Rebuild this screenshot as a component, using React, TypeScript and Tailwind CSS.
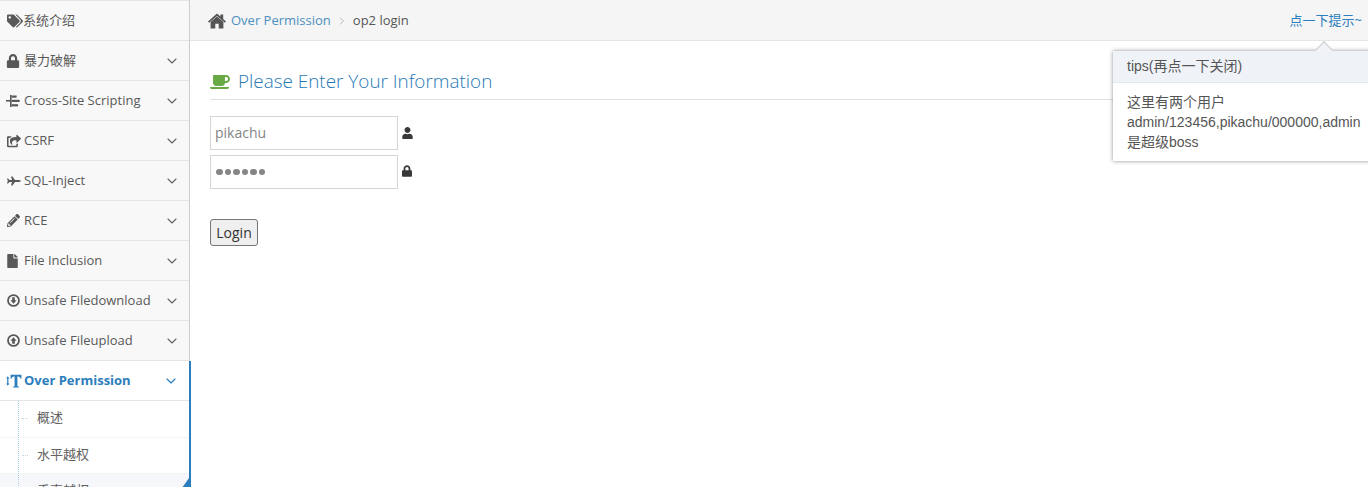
import { ChevronDown, ChevronRight } from "lucide-react";
import {
	FaCoffee,
	FaFile,
	FaLock,
	FaPencilAlt,
	FaShareSquare,
	FaTags,
	FaUser
} from "react-icons/fa";

const cjk = "font-['Open_Sans','Noto_Sans_CJK_SC',sans-serif]";

function TreeIcon() {
	return (
		<svg viewBox="0 0 14 14" className="w-[14px] h-[14px] ml-[-1px]" fill="currentColor">
			<rect x="0" y="6" width="4" height="1.6" />
			<rect x="4" y="1" width="1.6" height="12" />
			<rect x="5.6" y="1.5" width="5" height="2.2" />
			<rect x="5.6" y="5.8" width="8" height="2.2" />
			<rect x="5.6" y="10.2" width="6.5" height="2.2" />
		</svg>
	);
}

function CircleArrow({ up }: { up?: boolean }) {
	return (
		<svg viewBox="0 0 14 14" className={`w-[13px] h-[13px] ${up ? "rotate-180" : ""}`}>
			<circle cx="7" cy="7" r="5.9" fill="none" stroke="currentColor" strokeWidth="1.9" />
			<path d="M5.6 3.4h2.8v3.4h1.9L7 10.6 3.7 6.8h1.9z" fill="currentColor" />
		</svg>
	);
}

function PlaneIcon() {
	return (
		<svg viewBox="0 0 14 12" className="w-[14px] h-[12px]" fill="currentColor">
			<path d="M0 3.5h1L2.5 5H5L4 1.5h1.5L8 5h4Q14 5.6 14 6T12 7H8L5.5 10.5H4L5 7H2.5L1 8.5H0L.8 6z" />
		</svg>
	);
}

function TextHeightIcon() {
	return (
		<svg viewBox="0 0 16 14" className="w-[16px] h-[14px] mr-[2px]" fill="currentColor">
			<path d="M4.6.8H15.4V4.8H14.6Q14.2 2.4 12 2.4H11.4V11.8Q11.4 12.6 13 12.8V13.6H7V12.8Q8.6 12.6 8.6 11.8V2.4H8Q5.8 2.4 5.4 4.8H4.6z" />
			<path d="M1.8 2.2 3.4 4.6H2.4V9.4H3.4L1.8 11.8.2 9.4H1.2V4.6H.2z" />
		</svg>
	);
}

function HomeIcon() {
	return (
		<svg viewBox="0 0 18 16" className="w-[18px] h-[16px] text-[#555] mr-[5px]" fill="currentColor">
			<path d="M2.6 9 9 3.6 15.4 9v6.4h-4.7v-4.6H7.3v4.6H2.6z" />
			<path d="M0 8.4 9 .6l3.4 2.9V1.6h2.8v4.3L18 8.4l-1.1 1.3L9 3 1.1 9.7z" />
		</svg>
	);
}

const menu = [
	{ label: "暴力破解", icon: <FaLock className="w-[14px] h-[14px] ml-[-1px]" /> },
	{ label: "Cross-Site Scripting", icon: <TreeIcon /> },
	{ label: "CSRF", icon: <FaShareSquare className="w-[14px] h-[14px]" /> },
	{ label: "SQL-Inject", icon: <PlaneIcon /> },
	{ label: "RCE", icon: <FaPencilAlt className="w-[13px] h-[13px]" /> },
	{ label: "File Inclusion", icon: <FaFile className="w-[11px] h-[14px]" /> },
	{ label: "Unsafe Filedownload", icon: <CircleArrow /> },
	{ label: "Unsafe Fileupload", icon: <CircleArrow up /> }
];

function MenuRow({ label, icon }: { label: string; icon: React.ReactNode }) {
	return (
		<div className="h-10 flex items-center pl-[7px] pr-[9px] bg-[#f8f8f8] border-b border-[#e5e5e5] text-[#585858]">
			<span className="w-[17px] flex justify-start text-[#585858]">{icon}</span>
			<span className="flex-1 text-[13px]">{label}</span>
			<ChevronDown className="w-[16px] h-[16px] text-[#666]" strokeWidth={1.75} />
		</div>
	);
}

function SubRow({ label, active, tall }: { label: string; active?: boolean; tall?: boolean }) {
	return (
		<div
			className={`relative flex items-center pl-[37px] text-[13px] text-[#616161] border-b border-dotted border-[#ececec] ${
				tall ? "h-[37px]" : "h-9"
			} ${active ? "bg-[#f5f7fa]" : "bg-white"}`}
		>
			<span className="absolute left-[22px] top-[17px] w-[6px] border-t border-dotted border-[#c5d6e4]" />
			<span className={tall ? "mt-[-3px]" : "mt-[-1px]"}>{label}</span>
		</div>
	);
}

export default function App() {
	return (
		<div className={`h-[487px] w-[1368px] overflow-hidden flex bg-white relative ${cjk}`}>
			<aside className="relative z-10 w-[190px] shrink-0 h-full bg-[#f2f2f2] border-r border-[#cccccc]">
				<div className="border-t border-[#e5e5e5]">
					<div className="h-[40px] flex items-center pl-[7px] bg-[#f8f8f8] border-b border-[#e5e5e5] text-[#585858] text-[13px]">
						<FaTags className="w-[16px] h-[14px]" />
						系统介绍
					</div>
					{menu.map((m) => (
						<MenuRow key={m.label} label={m.label} icon={m.icon} />
					))}
				</div>
				<div className="relative bg-white border-r-[2px] border-[#2b7dbc] mr-[-2px]">
					<div className="h-10 flex items-center pl-[6px] pr-[10px] border-b border-[#e5e5e5] text-[#2b7dbc]">
						<TextHeightIcon />
						<span className="flex-1 text-[13px] font-bold">Over Permission</span>
						<ChevronDown className="w-[16px] h-[16px]" strokeWidth={1.75} />
					</div>
					<div className="relative">
						<span className="absolute left-[18px] top-0 bottom-0 border-l border-dotted border-[#a9cbe4] z-10" />
						<SubRow label="概述" tall />
						<SubRow label="水平越权" />
						<SubRow label="垂直越权" active />
					</div>
					<span className="absolute right-0 top-[117px] w-0 h-0 border-l-[7px] border-l-transparent border-b-[10px] border-b-[#2b7dbc]" />
				</div>
			</aside>

			<main className="flex-1 min-w-0 flex flex-col">
				<header className="h-[41px] shrink-0 flex items-center pl-[18px] pr-[6px] bg-[#f5f5f5] border-y border-t-[#f5f5f5] border-b-[#e5e5e5] text-[13px]">
					<HomeIcon />
					<span className="text-[#4c8fbd]">Over Permission</span>
					<ChevronRight className="w-[12px] h-[12px] text-[#b2b6bf] ml-[5px] mr-[5px]" />
					<span className="text-[#555]">op2 login</span>
					<span className="ml-auto text-[#2b7dbc] text-[13px]">点一下提示~</span>
				</header>

				<div className="pl-5 pr-5">
					<div className="mt-[26px] h-[33px] flex items-start border-b border-[#dce3e8]">
						<FaCoffee className="w-[20px] h-[18px] text-[#69aa46] mt-[6px] mr-2" />
						<h1 className="text-[18.9px] leading-[28px] font-light text-[#2679b5]">Please Enter Your Information</h1>
					</div>
					<form className="mt-4">
						<div className="flex items-center">
							<div className="w-[188px] h-[34px] border border-[#d5d5d5] flex items-center px-1 pb-[2px] text-[14px] text-[#858585]">pikachu</div>
							<FaUser className="w-[11px] h-[12px] text-[#393939] ml-1" />
						</div>
						<div className="flex items-center mt-[5px]">
							<div className="w-[188px] h-[34px] border border-[#d5d5d5] flex items-center gap-[2px] px-[5px]">
								{[0, 1, 2, 3, 4, 5].map((i) => (
									<span key={i} className="w-[6.5px] h-[6.5px] rounded-full bg-[#858585]" />
								))}
							</div>
							<FaLock className="w-[10px] h-[12px] text-[#393939] ml-1 mt-[-2px]" />
						</div>
						<button
							type="button"
							className="mt-[30px] block w-[48px] h-[27px] rounded-[3px] border border-[#767676] bg-[#efefef] text-[14px] text-[#333]"
						>
							Login
						</button>
					</form>
				</div>
			</main>

			<div className="absolute z-20 left-[1113px] top-[51px] w-[280px] bg-white shadow-[0_0_4px_rgba(0,0,0,0.45)] font-['Liberation_Sans','Noto_Sans_CJK_SC',sans-serif] text-[14px] text-[#555]">
				<span className="absolute left-[204px] top-[-7px] w-[14px] h-[14px] rotate-45 bg-[#f0f2f6] border-l border-t border-[#ccc]" />
				<div className="relative h-[32px] pl-[14px] flex items-center bg-[#eff3f8] border-b border-[#dfe9f2]">tips(再点一下关闭)</div>
				<div className="pl-[14px] pt-[9px] pb-[9px] w-[256px] leading-[20px]">
					这里有两个用户
					<br />
					admin/123456,pikachu/000000,admin
					<br />
					是超级boss
				</div>
			</div>
		</div>
	);
}
